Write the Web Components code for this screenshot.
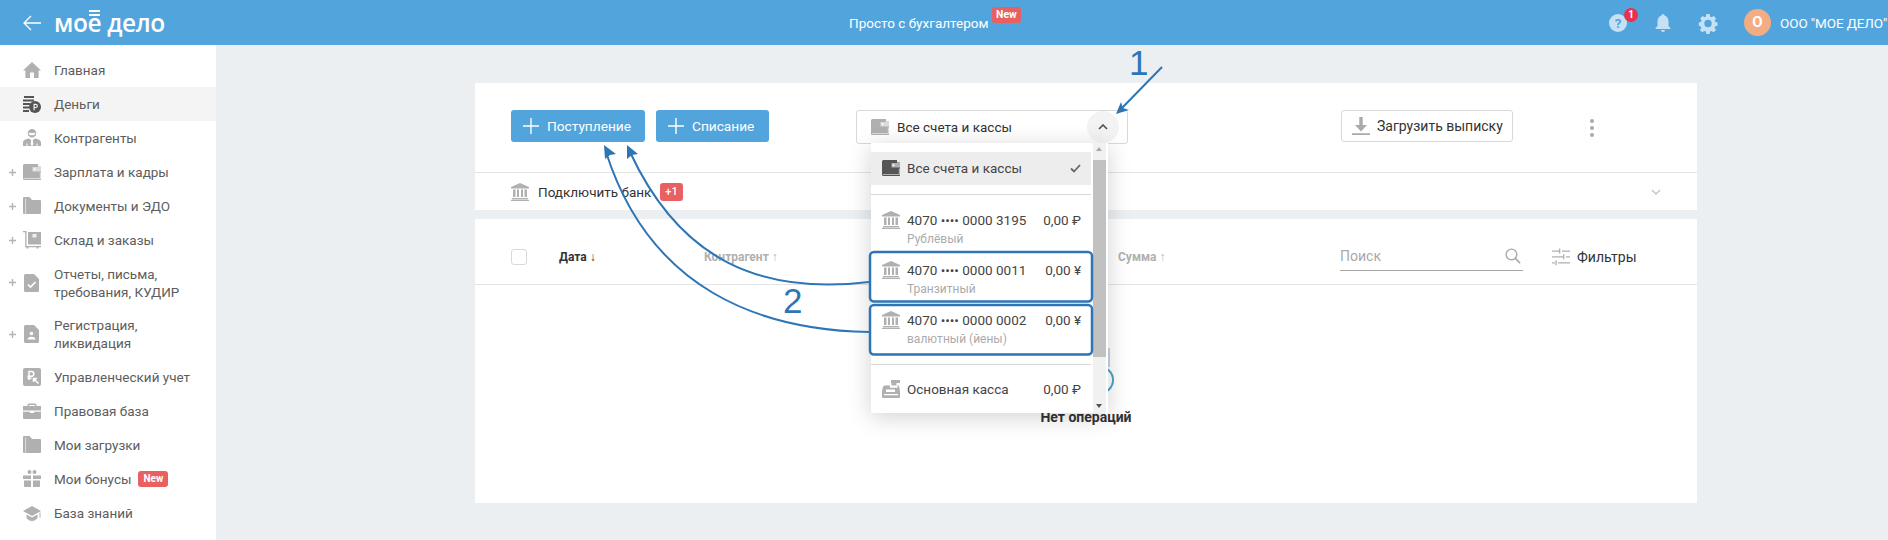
<!DOCTYPE html>
<html lang="ru">
<head>
<meta charset="utf-8">
<title>Деньги</title>
<style>
  html, body { margin: 0; height: 540px; overflow: hidden; background: #ebeff2; font-family: Roboto, "Liberation Sans", sans-serif; }
  money-page { width: 1888px; }
</style>
</head>
<body>
<money-page>
  <app-header slot="top"></app-header>
  <side-nav slot="nav">
    <nav-item icon="home">Главная</nav-item>
    <nav-item icon="money" active>Деньги</nav-item>
    <nav-item icon="person">Контрагенты</nav-item>
    <nav-item icon="wallet" plus>Зарплата и кадры</nav-item>
    <nav-item icon="folder" plus>Документы и ЭДО</nav-item>
    <nav-item icon="cart" plus>Склад и заказы</nav-item>
    <nav-item icon="report" plus tall>Отчеты, письма,<br>требования, КУДИР</nav-item>
    <nav-item icon="reg" plus tall>Регистрация,<br>ликвидация</nav-item>
    <nav-item icon="mgmt">Управленческий учет</nav-item>
    <nav-item icon="case">Правовая база</nav-item>
    <nav-item icon="folder">Мои загрузки</nav-item>
    <nav-item icon="gift" badge="New">Мои бонусы</nav-item>
    <nav-item icon="cap">База знаний</nav-item>
  </side-nav>
  <money-toolbar slot="main">
    <accounts-select>
      <account-row icon="wallet" selected>Все счета и кассы</account-row>
      <menu-sep></menu-sep>
      <account-row icon="bank" amount="0,00 ₽" sub="Рублёвый">4070 •••• 0000 3195</account-row>
      <account-row icon="bank" amount="0,00 ¥" sub="Транзитный">4070 •••• 0000 0011</account-row>
      <account-row icon="bank" amount="0,00 ¥" sub="валютный (йены)">4070 •••• 0000 0002</account-row>
      <menu-sep></menu-sep>
      <account-row icon="till" amount="0,00 ₽">Основная касса</account-row>
    </accounts-select>
  </money-toolbar>
  <operations-table slot="main"></operations-table>
  <shot-notes slot="notes"></shot-notes>
</money-page>

<script>
// icon shapes, all on an 18x18 box, fill comes from currentColor
const ICONS = {
  home: '<path d="M9 1l9 8.600h-2.400V17H11v-5.500H7V17H2.400V9.600H0z"/>',
  money: '<path d="M1 1h10v2H1zM0 4.500h11v2H0zM0 8h7v2H0zM0 11.500h6v2H0zM0 15h6v2H0z"/><circle cx="12" cy="12" r="6"/><path fill="#f4f4f4" d="M10.500 8.800h2.300a2 2 0 0 1 0 4.200h-1.100v2.300h-1.200zm1.200 1.100V12h1a1 1 0 0 0 0-2.100z"/>',
  person: '<path fill-rule="evenodd" d="M9 0a4.300 4.300 0 1 1 0 8.600A4.300 4.300 0 0 1 9 0zM5.800 3.500v1.200c.8 2 5.600 2 6.400 0V3.500c-1.500.8-4.900.8-6.400 0z"/><path d="M0 17v-3.500C0 11.300 2.800 10 6 9.500L8 11h2l2-1.500c3.200.5 6 1.800 6 4V17z"/><path fill="#fff" d="M8.300 11h1.400l.7 4.500L9 17l-1.400-1.500zM3.500 14.500h1V17h-1zM13.500 14.500h1V17h-1z"/>',
  wallet: '<path d="M1.500 1H15v2.500h3V17H1.500A1.500 1.500 0 0 1 0 15.500V2.500A1.500 1.500 0 0 1 1.500 1z"/><path fill="#fff" d="M9.500 4h8.500v4.500H9.500zM16.800 9.500H18V16h-1.200zM1 15h15.800v1H1z" opacity=".55"/><circle cx="11.500" cy="6.200" r="1" fill="#fff"/>',
  folder: '<path d="M1 0h5.500L9 3h8a1 1 0 0 1 1 1v12a1 1 0 0 1-1 1H1a1 1 0 0 1-1-1V1a1 1 0 0 1 1-1z"/><path fill="#fff" d="M2.400 1.500h.7V17h-.7z" opacity=".8"/>',
  cart: '<path d="M0 0h3.500v15H18v1.200h-2.500v1.300h-2v-1.300H5.500v1.300h-2v-1.300H2.200V1.200H0z"/><path d="M5 1h13v12.500H5z"/><path fill="#fff" d="M9.500 3h4v3.500h-4z" opacity=".8"/>',
  report: '<path d="M2.500 0h8.500L16 5v11.500A1.500 1.500 0 0 1 14.500 18h-12A1.500 1.500 0 0 1 1 16.500v-15A1.500 1.500 0 0 1 2.500 0z"/><path fill="none" stroke="#fff" stroke-width="1.700" d="M5 10.500l2.500 2.500L12.500 8"/>',
  reg: '<path d="M2.500 0h8.500L16 5v11.500A1.500 1.500 0 0 1 14.500 18h-12A1.500 1.500 0 0 1 1 16.500v-15A1.500 1.500 0 0 1 2.500 0z"/><circle cx="8.500" cy="8.500" r="1.800" fill="#fff"/><path fill="#fff" d="M4.500 14.500c0-2 2-2.800 4-2.800s4 .8 4 2.800z"/>',
  mgmt: '<rect x="0" y="0" width="18" height="18" rx="2"/><path fill="none" stroke="#fff" stroke-width="1.500" d="M6 12V3.500h2.500a2.300 2.300 0 0 1 0 4.700H4.500M4.500 10.300H8.500M10.500 10.500L15.500 15.500M10.500 14V10.500H14"/>',
  case: '<path d="M6 1.500h6A1.500 1.500 0 0 1 13.500 3v1H18v4.500H0V4h4.500V3A1.500 1.500 0 0 1 6 1.500zM6 3v1h6V3zM0 9.800h7V11h4V9.800h7V16a1 1 0 0 1-1 1H1a1 1 0 0 1-1-1z"/>',
  gift: '<circle cx="6.500" cy="2" r="2"/><circle cx="11.500" cy="2" r="2"/><path d="M0 5.500h8V9H0zM10 5.500h8V9h-8zM1 10.500h7V17H2a1 1 0 0 1-1-1zM10 10.500h7V16a1 1 0 0 1-1 1h-6z"/>',
  cap: '<path d="M9 2l9 5-9 5-9-5z"/><path d="M3.500 10.500L9 13.500l5.500-3V14c-1.500 2-3.500 3-5.500 3s-4-1-5.500-3z"/><path d="M16.500 8.500h1v5h-1z"/>',
  bank: '<path d="M9 0l9 4v1.500H0V4zM1 15h16v1.300H1zM0 16.800h18V18H0zM2 6.500h2.500V14H2zM6 6.500h2V14H6zM10 6.500h2V14h-2zM13.500 6.500H16V14h-2.500z"/>',
  till: '<path d="M9 0h9v3h-3.500v2.500H9.500V3H9zM3 5.500h5v2.300h7.500V5.500H17l1 5.500v6a1 1 0 0 1-1 1H1a1 1 0 0 1-1-1v-6l1-4A2 2 0 0 1 3 5.500z"/><path fill="#fff" d="M4 9.500h9V12H4zM2 14h14v1.200H2z"/>',
  down: '<path d="M7.300 0h3.400v8H15l-6 6.500L3 8h4.300zM0 16.300h18V18H0z"/>',
  search: '<circle cx="7.300" cy="7.300" r="6" fill="none" stroke="currentColor" stroke-width="1.500"/><path fill="none" stroke="currentColor" stroke-width="1.700" d="M11.700 11.700L17 17"/>',
  sliders: '<path d="M0 2.500h7v1.300H0zM10 2.500h8v1.300h-8zM7 .5h1.300v5H7zM0 8.300h11v1.300H0zM14 8.300h4v1.300h-4zM11 6.300h1.300v5H11zM0 14.200h3v1.300H0zM6 14.200h12v1.300H6zM3.500 12.200h1.300v5H3.500z"/>',
  help: '<circle cx="9" cy="9" r="9"/><text x="9" y="13.800" text-anchor="middle" font-size="13.500" font-weight="700" font-family="Roboto" fill="#52a5dc">?</text>',
  bell: '<path d="M9 0a1.500 1.500 0 0 1 1.500 1.600C13 2.400 14.500 4.500 14.500 7.500V12l2 2.300v.7h-15v-.7l2-2.300V7.500c0-3 1.500-5.100 4-5.900A1.500 1.500 0 0 1 9 0zM7 16h4a2 2 0 0 1-4 0z"/>',
  gear: '<path fill-rule="evenodd" d="M7.300 0h3.400l.4 2.500 1.500.7 2.200-1.300 2.300 2.500-1.400 2 .6 1.600 2.200.5v3.300l-2.300.5-.6 1.500 1.400 2.100-2.400 2.300-2-1.300-1.600.6-.4 2.500H7.300l-.5-2.500-1.500-.6-2.100 1.300L.9 15.900l1.400-2-.7-1.600L-.2 11.800V8.500l2.200-.5.600-1.600L1.200 4.400l2.400-2.500 2 1.300 1.300-.7zM9 5.800a3.700 3.700 0 1 0 0 7.400 3.700 3.700 0 0 0 0-7.400z"/>'
};

// small helper so each class only has to say its css and markup
function comp(name, css, html) {
  customElements.define(name, class extends HTMLElement {
    constructor() {
      super();
      const root = this.attachShadow({ mode: 'open' });
      root.innerHTML = '<style>' + css + '</style>' + (typeof html === 'function' ? html(this) : html);
    }
  });
}

customElements.define('ui-icon', class extends HTMLElement {
  static get observedAttributes() { return ['name']; }
  constructor() {
    super();
    this.attachShadow({ mode: 'open' });
  }
  attributeChangedCallback() { this.render(); }
  connectedCallback() { this.render(); }
  render() {
    const size = this.getAttribute('size') || 18;
    this.shadowRoot.innerHTML = `<style>:host{display:inline-flex;width:${size}px;height:${size}px;flex:none;color:inherit}
      svg{display:block;width:100%;height:100%;fill:currentColor;overflow:visible}</style>
      <svg viewBox="0 0 18 18">${ICONS[this.getAttribute('name')] || ''}</svg>`;
  }
});

comp('money-page', `
  :host { display: grid; grid-template-columns: 216px 1fr; grid-template-rows: 45px 495px; height: 540px; position: relative; overflow: hidden; }
  .top { grid-column: 1 / 3; }
  .main { padding: 38px 0 0 259px; width: 1222px; display: flex; flex-direction: column; gap: 9px; }
`, `
  <div class="top"><slot name="top"></slot></div>
  <slot name="nav"></slot>
  <div class="main"><slot name="main"></slot></div>
  <slot name="notes"></slot>
`);

comp('app-header', `
  :host { display: flex; align-items: center; height: 45px; background: #52a5dc; color: #fff; font: 13.500px Roboto, sans-serif; }
  .back { margin-left: 23px; width: 18px; height: 16px; }
  .logo { margin-left: 13px; width: 795px; font: 600 24.500px/45px "Open Sans", Roboto, sans-serif; letter-spacing: -.4px; white-space: nowrap; color: #fff; }
  .logo b { font-weight: inherit; position: relative; }
  .logo b::before { content: ""; position: absolute; left: 1px; right: 1px; top: 4px; height: 6px; border-top: 2px solid #fff; border-bottom: 2px solid #fff; box-sizing: border-box; }
  .center { display: flex; width: 180px; position: relative; white-space: nowrap; }
  .new { position: absolute; left: 143px; top: -8px; background: #e96060; border-radius: 3px; font: 700 10.500px/16px Roboto, sans-serif; padding: 0 4px; }
  .right { margin-left: auto; width: 279px; display: flex; align-items: center; white-space: nowrap; color: #c6e1f4; }
  .help { position: relative; display: flex; margin-left: 0; }
  .dot { position: absolute; left: 15px; top: -6px; width: 14px; height: 14px; border-radius: 50%; background: #e8304f; color: #fff; font: 700 10px/14px Roboto, sans-serif; text-align: center; }
  .bell { margin-left: 27px; }
  .gear { margin-left: 27px; }
  .avatar { margin-left: 27px; width: 27px; height: 27px; border-radius: 50%; background: #f4ad82; color: #fff; font: 700 15px/27px Roboto, sans-serif; text-align: center; flex: none; }
  .org { margin-left: 9px; color: #fff; letter-spacing: -.1px; }
`, `
  <svg class="back" viewBox="0 0 18 16"><path d="M8 1L1 8l7 7M1 8h17" fill="none" stroke="#fff" stroke-width="1.300"/></svg>
  <div class="logo">мо<b>е</b> дело</div>
  <div class="center">Просто с бухгалтером<span class="new">New</span></div>
  <div class="right">
    <span class="help"><ui-icon name="help"></ui-icon><span class="dot">1</span></span>
    <ui-icon class="bell" name="bell"></ui-icon>
    <ui-icon class="gear" name="gear"></ui-icon>
    <span class="avatar">О</span>
    <span class="org">ООО "МОЕ ДЕЛО"</span>
  </div>
`);

comp('side-nav', `
  :host { display: flex; flex-direction: column; background: #fff; padding-top: 8px; height: 487px; overflow: hidden; }
`, `<slot></slot>`);

comp('nav-item', `
  :host { display: flex; align-items: center; min-height: 34px; padding-left: 9px; color: #5d5d5d; font: 13.500px/18px Roboto, sans-serif; white-space: nowrap; }
  :host([active]) { background: #f4f4f4; }
  :host([tall]) { min-height: 51.500px; }
  .plus { width: 7px; height: 7px; margin-right: 7px; flex: none; color: #b4b4b4; visibility: hidden; }
  :host([plus]) .plus { visibility: visible; }
  ui-icon { color: #b0b0b0; margin-right: 13px; }
  :host([active]) ui-icon { color: #555; }
  .badge { margin-left: 7px; background: #e96060; color: #fff; border-radius: 3px; font: 700 10px/16px Roboto, sans-serif; padding: 0 5px; }
`, (el) => `
  <svg class="plus" viewBox="0 0 7 7"><path d="M2.800 0h1.400v2.800H7v1.400H4.200V7H2.800V4.200H0V2.800h2.800z" fill="currentColor"/></svg>
  <ui-icon name="${el.getAttribute('icon')}"></ui-icon>
  <span><slot></slot></span>
  ${el.hasAttribute('badge') ? '<span class="badge">' + el.getAttribute('badge') + '</span>' : ''}
`);

comp('ui-btn', `
  :host { display: inline-flex; align-items: center; box-sizing: border-box; height: 32px; border-radius: 3px; background: #52a5dc; color: #fff; font: 13.700px Roboto, sans-serif; padding-left: 12px; white-space: nowrap; }
  svg { width: 16px; height: 16px; margin-right: 8px; }
`, `<svg viewBox="0 0 16 16"><path d="M7.300 0h1.400v7.300H16v1.400H8.700V16H7.300V8.700H0V7.300h7.300z" fill="#fff"/></svg><slot></slot>`);

comp('money-toolbar', `
  :host { display: block; background: #fff; position: relative; z-index: 2; }
  .bar { display: flex; align-items: flex-start; height: 90px; box-sizing: border-box; padding: 27px 0 0 36px; border-bottom: 1px solid #e3e3e3; }
  .in { width: 134px; }
  .out { width: 113px; margin-left: 11px; }
  .sel { margin-left: 87px; }
  .load { margin-left: 213px; width: 172px; height: 32px; box-sizing: border-box; border: 1px solid #d9d9d9; border-radius: 3px; display: flex; align-items: center; padding-left: 10px; color: #333; font-size: 14px; font-family: Roboto, sans-serif; }
  .load ui-icon { color: #aaa; margin-right: 7px; }
  .dots { margin: 9px 0 0 77px; display: flex; flex-direction: column; gap: 3px; }
  .dots i { display: block; width: 4px; height: 4px; border-radius: 50%; background: #a9a9a9; }
  .bank { display: flex; align-items: center; height: 37px; padding-left: 36px; color: #333; font: 13.500px Roboto, sans-serif; }
  .bank ui-icon { color: #b0b0b0; margin-right: 9px; }
  .plus { margin-left: 9px; background: #e96060; color: #fff; border-radius: 3px; font: 500 11px/18px Roboto, sans-serif; padding: 0 5px; }
  .chev { margin-left: auto; margin-right: 36px; width: 10px; height: 6px; }
`, `
  <div class="bar">
    <ui-btn class="in">Поступление</ui-btn>
    <ui-btn class="out">Списание</ui-btn>
    <span class="sel"><slot></slot></span>
    <div class="load"><ui-icon name="down"></ui-icon>Загрузить выписку</div>
    <div class="dots"><i></i><i></i><i></i></div>
  </div>
  <div class="bank">
    <ui-icon name="bank"></ui-icon>Подключить банк<span class="plus">+1</span>
    <svg class="chev" viewBox="0 0 10 6"><path d="M1 1l4 4 4-4" fill="none" stroke="#c4c4c4" stroke-width="1.400"/></svg>
  </div>
`);

comp('accounts-select', `
  :host { display: block; position: relative; width: 272px; height: 34px; box-sizing: border-box; border: 1px solid #d9d9d9; border-radius: 3px; font: 13.500px Roboto, sans-serif; color: #333; }
  .val { display: flex; align-items: center; height: 32px; padding-left: 14px; }
  .val ui-icon { color: #b0b0b0; margin-right: 8px; }
  .circle { position: absolute; left: 230px; top: 0; width: 32px; height: 32px; border-radius: 50%; background: #f3f3f3; display: flex; align-items: center; justify-content: center; }
  .circle svg { width: 10px; height: 6px; }
  .menu { position: absolute; left: 14px; top: 32px; width: 237px; height: 270px; background: #fff; box-shadow: 0 4px 22px rgba(0,0,0,.18); box-sizing: border-box; padding-top: 9px; overflow: hidden; }
  .list { width: 220px; }
  .scroll { position: absolute; left: 222px; top: 0; width: 13px; height: 270px; background: #f1f1f1; }
  .thumb { position: absolute; left: 0; top: 17px; width: 13px; height: 197px; background: #c1c1c1; }
  .up, .dn { position: absolute; left: 3px; width: 0; height: 0; border: 3.500px solid transparent; }
  .up { top: 4px; border-bottom: 4px solid #a8a8a8; border-top: 0; }
  .dn { bottom: 5px; border-top: 4px solid #505050; border-bottom: 0; }
`, `
  <div class="val"><ui-icon name="wallet"></ui-icon>Все счета и кассы</div>
  <div class="circle"><svg viewBox="0 0 10 6"><path d="M1 5l4-4 4 4" fill="none" stroke="#555" stroke-width="1.700"/></svg></div>
  <div class="menu">
    <div class="list"><slot></slot></div>
    <div class="scroll"><i class="up"></i><div class="thumb"></div><i class="dn"></i></div>
  </div>
`);

comp('menu-sep', `
  :host { display: block; height: 1px; background: #d8d8d8; margin: 9px 0 10px; }
`, ``);

comp('account-row', `
  :host { display: block; box-sizing: border-box; height: 50px; padding: 6px 10px 0 11px; font: 13.500px/18px Roboto, sans-serif; color: #444; white-space: nowrap; }
  :host([selected]) { height: 33px; background: #ededed; padding-top: 7px; }
  :host(:last-of-type) { padding-top: 5px; }
  .line { display: flex; align-items: center; }
  ui-icon { color: #b0b0b0; margin-right: 7px; }
  :host([selected]) ui-icon { color: #555; }
  .amt { margin-left: auto; }
  .check { margin-left: auto; width: 11px; height: 9px; }
  .sub { margin: 1px 0 0 25px; font-size: 12px; line-height: 18px; color: #ababab; }
`, (el) => `
  <div class="line">
    <ui-icon name="${el.getAttribute('icon')}"></ui-icon><span><slot></slot></span>
    ${el.hasAttribute('selected') ? '<svg class="check" viewBox="0 0 11 9"><path d="M1 4.500l3 3 6-6.500" fill="none" stroke="#666" stroke-width="1.800"/></svg>' : ''}
    ${el.hasAttribute('amount') ? '<span class="amt">' + el.getAttribute('amount') + '</span>' : ''}
  </div>
  ${el.hasAttribute('sub') ? '<div class="sub">' + el.getAttribute('sub') + '</div>' : ''}
`);

comp('operations-table', `
  :host { display: block; background: #fff; height: 284px; font: 14px Roboto, sans-serif; color: #333; }
  .head { display: grid; grid-template-columns: 48px 145px 414px 222px 212px 1fr; align-items: center; height: 66px; box-sizing: border-box; padding: 10px 0 0 36px; border-bottom: 1px solid #e3e3e3; font-size: 12px; font-weight: 700; color: #b0b0b0; white-space: nowrap; }
  .box { width: 16px; height: 16px; box-sizing: border-box; border: 1px solid #d9d9d9; border-radius: 3px; }
  .on { color: #333; }
  .search { width: 183px; height: 30px; box-sizing: border-box; border-bottom: 1px solid #a8a8a8; display: flex; align-items: center; justify-content: space-between; padding-right: 2px; font-size: 14px; font-weight: 400; color: #a8a8a8; margin-top: -1px; }
  .filter { display: flex; align-items: center; gap: 7px; font-size: 14px; font-weight: 400; color: #333; }
  .filter ui-icon { color: #b0b0b0; }
  .empty { display: flex; flex-direction: column; align-items: center; padding-top: 63px; font-weight: 700; font-size: 14px; }
  .empty svg { width: 60px; height: 60px; }
  .empty span { line-height: 18px; }
`, `
  <div class="head">
    <div class="box"></div>
    <div class="on">Дата ↓</div>
    <div>Контрагент ↑</div>
    <div>Сумма ↑</div>
    <div class="search">Поиск<ui-icon name="search" size="16"></ui-icon></div>
    <div class="filter"><ui-icon name="sliders"></ui-icon>Фильтры</div>
  </div>
  <div class="empty">
    <svg viewBox="0 0 60 60"><rect x="52" y="0" width="2" height="19" fill="#c5d5e5"/><circle cx="44" cy="32" r="13" fill="none" stroke="#4aa3c9" stroke-width="2"/></svg>
    <span>Нет операций</span>
  </div>
`);

// the blue hand drawn marks on the screenshot, free canvas over the whole page
comp('shot-notes', `
  :host { position: absolute; left: 0; top: 0; width: 1888px; height: 540px; z-index: 5; pointer-events: none; }
  svg { display: block; width: 1888px; height: 540px; }
  text { font: 35px "Liberation Sans", sans-serif; fill: #2e75b6; }
`, `
  <svg viewBox="0 0 1888 540">
    <g fill="none" stroke="#2e75b6" stroke-width="2">
      <path d="M1162 67L1121 109"/>
      <path d="M869 282C760 295 680 260 630 152"/>
      <path d="M869 332C760 330 650 290 606 152"/>
      <rect x="870" y="252" width="222" height="49.500" rx="4" stroke-width="2.500"/>
      <rect x="870" y="305" width="222" height="49.500" rx="4" stroke-width="2.500"/>
    </g>
    <g fill="#2e75b6">
      <path d="M1116 114L1121 102 1123 108 1129 110z"/>
      <path d="M627 145L627 159 632 155 638 154z"/>
      <path d="M604 145L605 159 610 155 616 154z"/>
    </g>
    <text x="1129" y="75">1</text>
    <text x="783" y="313">2</text>
  </svg>
`);
</script>
</body>
</html>
